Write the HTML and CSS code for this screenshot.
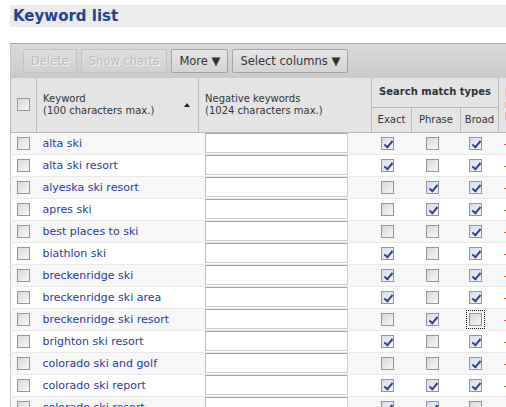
FILE: index.html
```html
<!DOCTYPE html>
<html lang="en">
<head>
    <meta charset="UTF-8">
    <title>Keyword list</title>
    <link rel="stylesheet" href="styles.css">
</head>
<body>
    <div class="page">
        <h1 class="page-title">Keyword list</h1>

        <div class="toolbar">
            <button class="btn" disabled>Delete</button>
            <button class="btn" disabled>Show charts</button>
            <button class="btn">More &#9660;</button>
            <button class="btn">Select columns &#9660;</button>
        </div>

        <table class="grid">
            <colgroup>
                <col class="c-check">
                <col class="c-keyword">
                <col class="c-negative">
                <col class="c-exact">
                <col class="c-phrase">
                <col class="c-broad">
                <col class="c-bid">
            </colgroup>
            <thead>
                <tr>
                    <th rowspan="2" class="th-check"><span class="cb"></span></th>
                    <th rowspan="2">
                        <div class="th-sort">
                            <span>Keyword<br>(100 characters max.)</span>
                            <span class="sort-up"></span>
                        </div>
                    </th>
                    <th rowspan="2">Negative keywords<br>(1024 characters max.)</th>
                    <th colspan="3" class="th-group">Search match types</th>
                    <th rowspan="2" class="th-bid">Default<br>max. CPC<br>bid</th>
                </tr>
                <tr>
                    <th class="th-sub">Exact</th>
                    <th class="th-sub">Phrase</th>
                    <th class="th-sub">Broad</th>
                </tr>
            </thead>
            <tbody>
                <tr>
                    <td class="td-check"><span class="cb"></span></td>
                    <td class="kw">alta ski</td>
                    <td><input class="neg" type="text"></td>
                    <td class="mt"><span class="cb on"></span></td>
                    <td class="mt"><span class="cb"></span></td>
                    <td class="mt"><span class="cb on"></span></td>
                    <td class="bid">-</td>
                </tr>
                <tr>
                    <td class="td-check"><span class="cb"></span></td>
                    <td class="kw">alta ski resort</td>
                    <td><input class="neg" type="text"></td>
                    <td class="mt"><span class="cb on"></span></td>
                    <td class="mt"><span class="cb"></span></td>
                    <td class="mt"><span class="cb on"></span></td>
                    <td class="bid">-</td>
                </tr>
                <tr>
                    <td class="td-check"><span class="cb"></span></td>
                    <td class="kw">alyeska ski resort</td>
                    <td><input class="neg" type="text"></td>
                    <td class="mt"><span class="cb"></span></td>
                    <td class="mt"><span class="cb on"></span></td>
                    <td class="mt"><span class="cb on"></span></td>
                    <td class="bid">-</td>
                </tr>
                <tr>
                    <td class="td-check"><span class="cb"></span></td>
                    <td class="kw">apres ski</td>
                    <td><input class="neg" type="text"></td>
                    <td class="mt"><span class="cb"></span></td>
                    <td class="mt"><span class="cb on"></span></td>
                    <td class="mt"><span class="cb on"></span></td>
                    <td class="bid">-</td>
                </tr>
                <tr>
                    <td class="td-check"><span class="cb"></span></td>
                    <td class="kw">best places to ski</td>
                    <td><input class="neg" type="text"></td>
                    <td class="mt"><span class="cb"></span></td>
                    <td class="mt"><span class="cb"></span></td>
                    <td class="mt"><span class="cb on"></span></td>
                    <td class="bid">-</td>
                </tr>
                <tr>
                    <td class="td-check"><span class="cb"></span></td>
                    <td class="kw">biathlon ski</td>
                    <td><input class="neg" type="text"></td>
                    <td class="mt"><span class="cb on"></span></td>
                    <td class="mt"><span class="cb"></span></td>
                    <td class="mt"><span class="cb on"></span></td>
                    <td class="bid">-</td>
                </tr>
                <tr>
                    <td class="td-check"><span class="cb"></span></td>
                    <td class="kw">breckenridge ski</td>
                    <td><input class="neg" type="text"></td>
                    <td class="mt"><span class="cb on"></span></td>
                    <td class="mt"><span class="cb"></span></td>
                    <td class="mt"><span class="cb on"></span></td>
                    <td class="bid">-</td>
                </tr>
                <tr>
                    <td class="td-check"><span class="cb"></span></td>
                    <td class="kw">breckenridge ski area</td>
                    <td><input class="neg" type="text"></td>
                    <td class="mt"><span class="cb on"></span></td>
                    <td class="mt"><span class="cb"></span></td>
                    <td class="mt"><span class="cb on"></span></td>
                    <td class="bid">-</td>
                </tr>
                <tr>
                    <td class="td-check"><span class="cb"></span></td>
                    <td class="kw">breckenridge ski resort</td>
                    <td><input class="neg" type="text"></td>
                    <td class="mt"><span class="cb"></span></td>
                    <td class="mt"><span class="cb on"></span></td>
                    <td class="mt"><span class="cb focus"></span></td>
                    <td class="bid">-</td>
                </tr>
                <tr>
                    <td class="td-check"><span class="cb"></span></td>
                    <td class="kw">brighton ski resort</td>
                    <td><input class="neg" type="text"></td>
                    <td class="mt"><span class="cb on"></span></td>
                    <td class="mt"><span class="cb"></span></td>
                    <td class="mt"><span class="cb on"></span></td>
                    <td class="bid">-</td>
                </tr>
                <tr>
                    <td class="td-check"><span class="cb"></span></td>
                    <td class="kw">colorado ski and golf</td>
                    <td><input class="neg" type="text"></td>
                    <td class="mt"><span class="cb"></span></td>
                    <td class="mt"><span class="cb"></span></td>
                    <td class="mt"><span class="cb on"></span></td>
                    <td class="bid">-</td>
                </tr>
                <tr>
                    <td class="td-check"><span class="cb"></span></td>
                    <td class="kw">colorado ski report</td>
                    <td><input class="neg" type="text"></td>
                    <td class="mt"><span class="cb on"></span></td>
                    <td class="mt"><span class="cb on"></span></td>
                    <td class="mt"><span class="cb on"></span></td>
                    <td class="bid">-</td>
                </tr>
                <tr>
                    <td class="td-check"><span class="cb"></span></td>
                    <td class="kw">colorado ski resort</td>
                    <td><input class="neg" type="text"></td>
                    <td class="mt"><span class="cb on"></span></td>
                    <td class="mt"><span class="cb on"></span></td>
                    <td class="mt"><span class="cb"></span></td>
                    <td class="bid">-</td>
                </tr>
            </tbody>
        </table>
    </div>
</body>
</html>
```

FILE: styles.css
```css
:root {
    --title: #23448a;
    --link: #2a3c98;
    --line: #b9b9b9;
    --head: #e4e4e4;
}

* {
    margin: 0;
    padding: 0;
    box-sizing: border-box;
}

body {
    background-color: white;
    color: #333;
    font-family: 'DejaVu Sans', Verdana, sans-serif;
    font-size: 11px;
    overflow: hidden;
}

.page {
    padding: 5px 0 0 10px;
    width: 620px;
}

.page-title {
    background-color: #ebebeb;
    color: var(--title);
    font-size: 15px;
    font-weight: bold;
    line-height: 22px;
    height: 22px;
    padding-left: 3px;
}

.toolbar {
    margin-top: 16px;
    height: 35px;
    display: flex;
    align-items: center;
    gap: 4px;
    padding: 0 0 0 12px;
    border-top: 1px solid #a6a6a6;
    border-left: 1px solid #c8c8c8;
    background: linear-gradient(#dadada, #c9c9c9);
}

.btn {
    height: 24px;
    padding: 0 7px;
    font-family: 'DejaVu Sans', Verdana, sans-serif;
    font-size: 11.5px;
    color: #333;
    background: linear-gradient(#e6e6e6, #d3d3d3);
    border: 1px solid #a3a3a3;
    border-radius: 2px;
}

.btn:disabled {
    color: #bcbcbc;
    text-shadow: 1px 1px 0 #f4f4f4;
    border-color: #c2c2c2;
    background: linear-gradient(#dedede, #d0d0d0);
}

.grid {
    width: 600px;
    table-layout: fixed;
    border-collapse: collapse;
    border-left: 1px solid #c8c8c8;
}

.c-check { width: 26px; }
.c-keyword { width: 162px; }
.c-negative { width: 173px; }
.c-exact { width: 40px; }
.c-phrase { width: 49px; }
.c-broad { width: 38px; }

.grid th {
    background-color: var(--head);
    border: 1px solid var(--line);
    border-top: none;
    font-weight: normal;
    font-size: 10px;
    text-align: left;
    padding: 0 6px;
    line-height: 12px;
    white-space: nowrap;
    overflow: hidden;
}

.grid .th-check {
    text-align: center;
    padding: 0;
}

.th-sort {
    display: flex;
    align-items: center;
    justify-content: space-between;
}

.sort-up {
    width: 0;
    height: 0;
    border-left: 3px solid transparent;
    border-right: 3px solid transparent;
    border-bottom: 4px solid #222;
    margin-right: 2px;
}

.grid .th-group {
    font-weight: bold;
    text-align: center;
    height: 29px;
}

.grid .th-sub {
    text-align: center;
    height: 25px;
    padding: 0;
}

.grid .th-bid {
    color: #9b2b10;
    border-right: none;
}

.grid td {
    height: 22px;
    border-bottom: 1px solid #e8e8e8;
    padding: 0;
    white-space: nowrap;
}

.grid tbody tr:nth-child(odd) td {
    background-color: #f7f7f7;
}

.td-check {
    text-align: center;
}

.kw {
    color: var(--link);
    padding-left: 6px !important;
}

.neg {
    display: block;
    width: 143px;
    height: 20px;
    margin-left: 6px;
    border: 1px solid #d0d0d0;
    border-top-color: #a6a6a6;
    border-left-color: #bdbdbd;
    background: white;
}

.mt {
    text-align: center;
    padding-right: 8px !important;
}

.bid {
    color: #c65a1e;
    padding-left: 5px !important;
}

.cb {
    display: inline-block;
    position: relative;
    width: 13px;
    height: 13px;
    vertical-align: middle;
    border: 1px solid #959595;
    background: linear-gradient(135deg, #d8d8d8, #f8f8f8);
}

.cb.on {
    background: linear-gradient(135deg, #d6dcef, #f4f6fc);
}

.cb.on::after {
    content: '';
    position: absolute;
    left: 4px;
    top: 1px;
    width: 3px;
    height: 7px;
    border-right: 2px solid #34428a;
    border-bottom: 2px solid #34428a;
    transform: rotate(40deg);
}

.cb.focus {
    outline: 1px dotted #111;
    outline-offset: 2px;
}
```
